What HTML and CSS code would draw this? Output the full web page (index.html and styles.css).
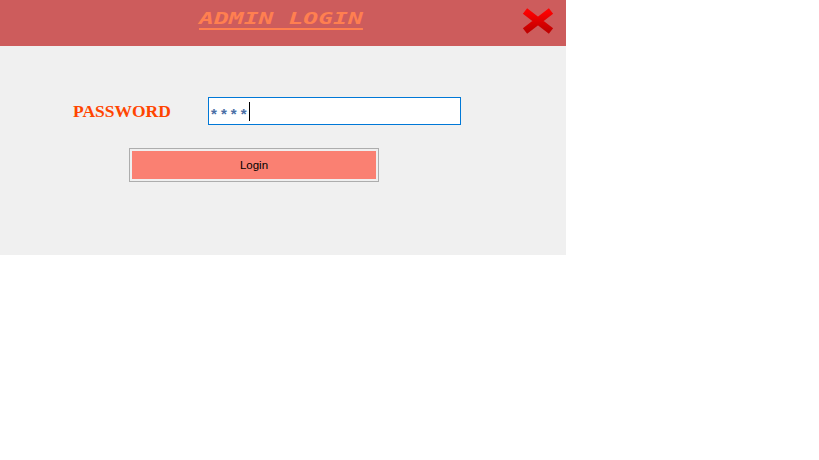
FILE: index.html
```html
<!DOCTYPE html>
<html>
<head>
<meta charset="utf-8">
<link rel="stylesheet" href="styles.css">
</head>
<body>
<div class="window">
  <div class="titlebar">
    <div class="title">ADMIN LOGIN</div>
    <div class="close">
      <svg width="34" height="28" viewBox="0 0 34 28">
        <defs>
          <linearGradient id="g" x1="0" y1="0" x2="0" y2="1">
            <stop offset="0" stop-color="#ff0000"/>
            <stop offset="1" stop-color="#c00000"/>
          </linearGradient>
        </defs>
        <path d="M4 4 L30 24 M30 4 L4 24" stroke="url(#g)" stroke-width="7" stroke-linecap="butt" fill="none"/>
      </svg>
    </div>
  </div>
  <div class="content">
    <div class="row">
      <label class="label">PASSWORD</label>
      <div class="input"><span class="stars">****</span><span class="caret"></span></div>
    </div>
    <div class="btnrow">
      <div class="btn"><div class="btn-inner">Login</div></div>
    </div>
  </div>
</div>
</body>
</html>
```
FILE: styles.css
```css
html, body { margin: 0; padding: 0; background: #fff; }
.window { width: 566px; height: 255px; background: #f0f0f0; display: flex; flex-direction: column; }
.titlebar { height: 46px; background: #cd5c5c; display: flex; align-items: flex-start; }
.title {
  margin-left: 199px; margin-top: 9px; line-height: 20px; width: 110px;
  font-family: "DejaVu Sans Mono", monospace; font-weight: bold; font-style: italic;
  font-size: 16.5px; letter-spacing: 0; color: #ff7f50;
  text-decoration: underline; text-underline-offset: 4px; text-decoration-thickness: 2px;
  transform: scaleX(1.5); transform-origin: left center; white-space: nowrap;
}
.close { margin-left: auto; margin-right: 11px; margin-top: 7px; width: 34px; height: 28px; }
.close svg { display: block; }
.content { flex: 1; display: flex; flex-direction: column; padding-top: 51px; }
.row { display: flex; align-items: center; height: 28px; }
.label {
  margin-left: 73px; width: 135px;
  font-family: "Liberation Serif", serif; font-weight: bold; font-size: 17.5px; color: #ff4500;
  padding-top: 1px;
}
.input {
  width: 253px; height: 28px; border: 1px solid #0078d7; background: #fff;
  display: flex; align-items: center; padding-left: 2px; box-sizing: border-box;
}
.stars { font-family: "Liberation Sans", sans-serif; font-weight: bold; font-size: 15px; color: #4a6fa5; letter-spacing: 4.1px; padding-top: 5px; }
.caret { width: 1px; height: 19px; background: #000; margin-left: -2px; }
.btnrow { margin-top: 23px; padding-left: 129px; display: flex; }
.btn { width: 250px; height: 34px; border: 1px solid #adadad; padding: 2px; box-sizing: border-box; background: #efefef; }
.btn-inner {
  width: 100%; height: 100%; background: #fa8072; display: flex; align-items: center; justify-content: center;
  font-family: "Liberation Sans", sans-serif; font-size: 11.5px; color: #000;
}
```
